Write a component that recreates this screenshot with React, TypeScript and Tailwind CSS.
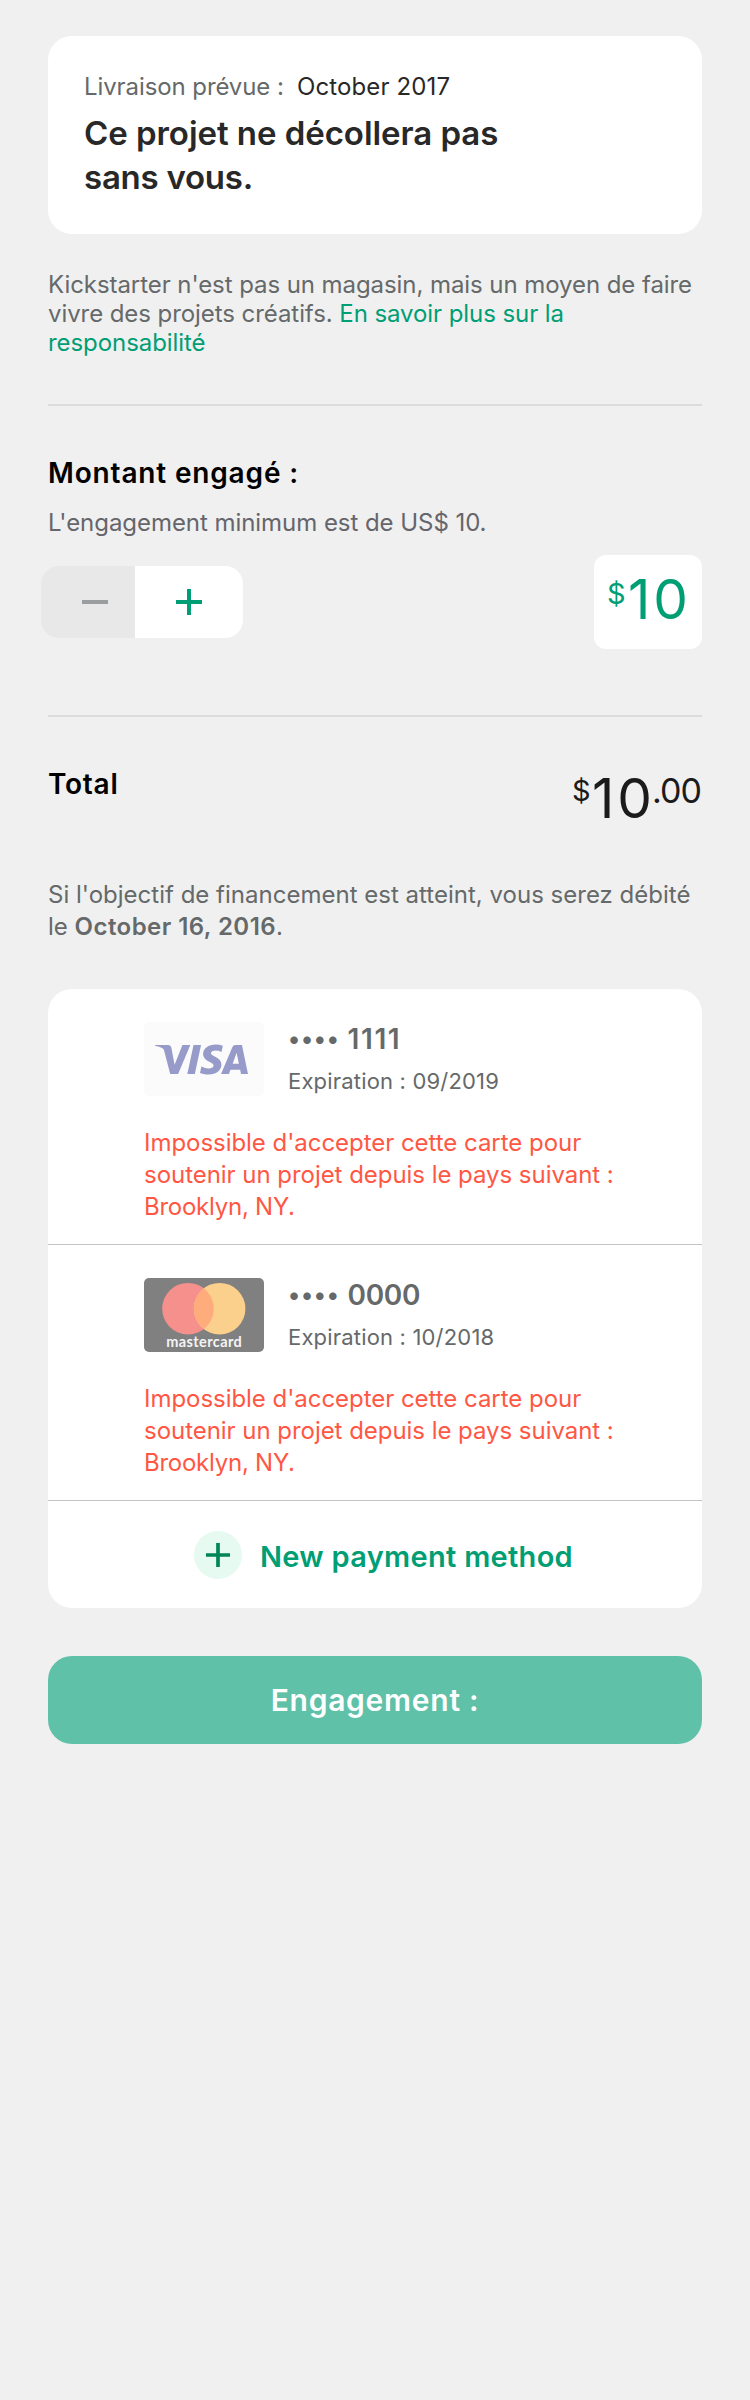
import { SiVisa } from "react-icons/si";

function PlusIcon({ className, size }: { className: string; size: number }) {
  return (
    <svg width={size} height={size} viewBox="0 0 26 26" className={className}>
      <path d="M13 0v26M0 13h26" stroke="currentColor" strokeWidth="4" />
    </svg>
  );
}

function VisaCard() {
  return (
    <div className="flex h-[74px] w-[120px] items-center overflow-hidden rounded-[5px] bg-[#fbfbfb] pl-[11px]">
      <SiVisa className="h-[93px] w-[93px] shrink-0 text-[#969bca]" />
    </div>
  );
}

function MastercardCard() {
  return (
    <svg width="120" height="74" viewBox="0 0 120 74">
      <rect width="120" height="74" rx="5" fill="#808080" />
      <circle cx="44" cy="30.7" r="25.8" fill="#f5908c" />
      <circle cx="75.6" cy="30.7" r="25.8" fill="#fbcf8c" />
      <path d="M59.8 10.3a25.8 25.8 0 0 1 0 40.8a25.8 25.8 0 0 1 0-40.8z" fill="#ffac7d" />
      <text x="22.3" y="69.3" textLength="75.5" fontFamily="Lato, sans-serif" fontSize="14.5" fontWeight="700" fill="#f4f4f4">
        mastercard
      </text>
    </svg>
  );
}

type CardProps = {
  logo: React.ReactNode;
  digits: React.ReactNode;
  expiration: string;
};

function CardRow({ logo, digits, expiration }: CardProps) {
  return (
    <div className="h-[256px] border-b border-[#c4c4c6] pt-[33px] pl-[96px]">
      <div className="flex h-[74px]">
        {logo}
        <div className="-mt-px ml-6 text-[#656969]">
          <div className="flex h-9 text-[28px] leading-9 font-semibold">
            <span className="w-[59.5px] text-[24px] tracking-[0.8px]">••••</span>
            {digits}
          </div>
          <div className="mt-2.5 text-[22px] leading-7 tracking-[0.18px]">{expiration}</div>
        </div>
      </div>
      <p className="mt-[31px] text-[24px] leading-8 tracking-[-0.04px] whitespace-nowrap text-[#ff5744]">
        Impossible d'accepter cette carte pour
        <br />
        soutenir un projet depuis le pays suivant :
        <br />
        <span className="tracking-[-0.25px]">Brooklyn, NY.</span>
      </p>
    </div>
  );
}

export default function App() {
  return (
    <main className="flex h-[2400px] w-[750px] flex-col bg-[#f0f0f0] px-12 pt-9 font-[Inter,sans-serif] whitespace-nowrap">
      <section className="h-[198px] rounded-3xl bg-white pt-[35px] pl-9">
        <div className="flex text-[24px] leading-8">
          <span className="w-[213px] tracking-[-0.09px] text-[#656969]">Livraison prévue :</span>
          <span className="tracking-[0.12px] text-[#282828]">October 2017</span>
        </div>
        <h1 className="mt-2 text-[33px] leading-[44px] font-semibold tracking-[-0.05px] text-[#282828]">
          Ce projet ne décollera pas
          <br />
          <span className="tracking-[-0.25px]">sans vous.</span>
        </h1>
      </section>

      <p className="mt-[37px] h-[87px] text-[24px] leading-[28.8px] tracking-[-0.07px] text-[#656969]">
        Kickstarter n'est pas un magasin, mais un moyen de faire
        <br />
        vivre des projets créatifs.{" "}
        <a className="text-[#009e74]">
          En savoir plus sur la
          <br />
          responsabilité
        </a>
      </p>

      <hr className="mt-[46px] h-0.5 border-0 bg-[#dcdcdc]" />

      <h2 className="mt-[49px] text-[28px] leading-9 font-semibold tracking-[0.84px] text-black">Montant engagé :</h2>
      <p className="mt-4 text-[24px] leading-8 tracking-[-0.05px] text-[#65656b]">
        L'engagement minimum est de US$ 10.
      </p>

      <div className="mt-4 flex h-[94px] items-start justify-between">
        <div className="mt-[11px] -ml-[7px] flex h-[72px] overflow-hidden rounded-[18px]">
          <button className="flex w-[94px] items-center bg-[#e8e8e8] pl-[41px]">
            <span className="h-1 w-[26px] bg-[#9b9e9e]" />
          </button>
          <button className="flex w-[108px] items-center bg-white pl-[41px]">
            <PlusIcon size={26} className="text-[#009e74]" />
          </button>
        </div>
        <div className="flex h-[94px] w-[108px] items-start rounded-xl bg-white pl-[13px] text-[#009e74]">
          <span className="mt-[23px] w-[21px] text-[29px] leading-8">$</span>
          <span className="mt-[17px] text-[55px] leading-[55px] tracking-[3px]">10</span>
        </div>
      </div>

      <hr className="mt-[66px] h-0.5 border-0 bg-[#dcdcdc]" />

      <div className="mt-[49px] flex h-16 items-start justify-between">
        <h2 className="text-[28px] leading-9 font-semibold tracking-[0.75px] text-black">Total</h2>
        <div className="flex items-start text-[#1b1b1b]">
          <span className="mt-[9px] w-5 text-[29px] leading-8">$</span>
          <span className="mt-[5px] w-[60px] text-[55px] leading-[55px] tracking-[3px]">10</span>
          <span className="mt-2 w-[50px] text-[34px] leading-[34px] tracking-[-1px]">.00</span>
        </div>
      </div>

      <p className="mt-[49px] text-[24px] leading-8 tracking-[0.01px] text-[#656969]">
        Si l'objectif de financement est atteint, vous serez débité
        <br />
        <span>le </span>
        <strong className="font-semibold tracking-[0.45px]">October 16, 2016</strong>.
      </p>

      <section className="mt-[46px] h-[619px] overflow-hidden rounded-3xl bg-white">
        <CardRow
          logo={<VisaCard />}
          digits={<span className="tracking-[1.6px]">1111</span>}
          expiration="Expiration : 09/2019"
        />
        <CardRow
          logo={<MastercardCard />}
          digits={<span className="tracking-[-0.3px]">0000</span>}
          expiration="Expiration : 10/2018"
        />
        <button className="flex items-center pt-[30px] pl-[146px]">
          <span className="flex size-12 items-center justify-center rounded-full bg-[#e6faf1]">
            <PlusIcon size={24} className="text-[#008556]" />
          </span>
          <span className="ml-[18px] pt-[3px] text-[29px] leading-9 font-semibold tracking-[0.3px] text-[#009e74]">
            New payment method
          </span>
        </button>
      </section>

      <button className="mt-12 h-[88px] rounded-3xl bg-[#5ec1a8] text-[30px] font-semibold tracking-[0.73px] text-white">
        Engagement :
      </button>
    </main>
  );
}
